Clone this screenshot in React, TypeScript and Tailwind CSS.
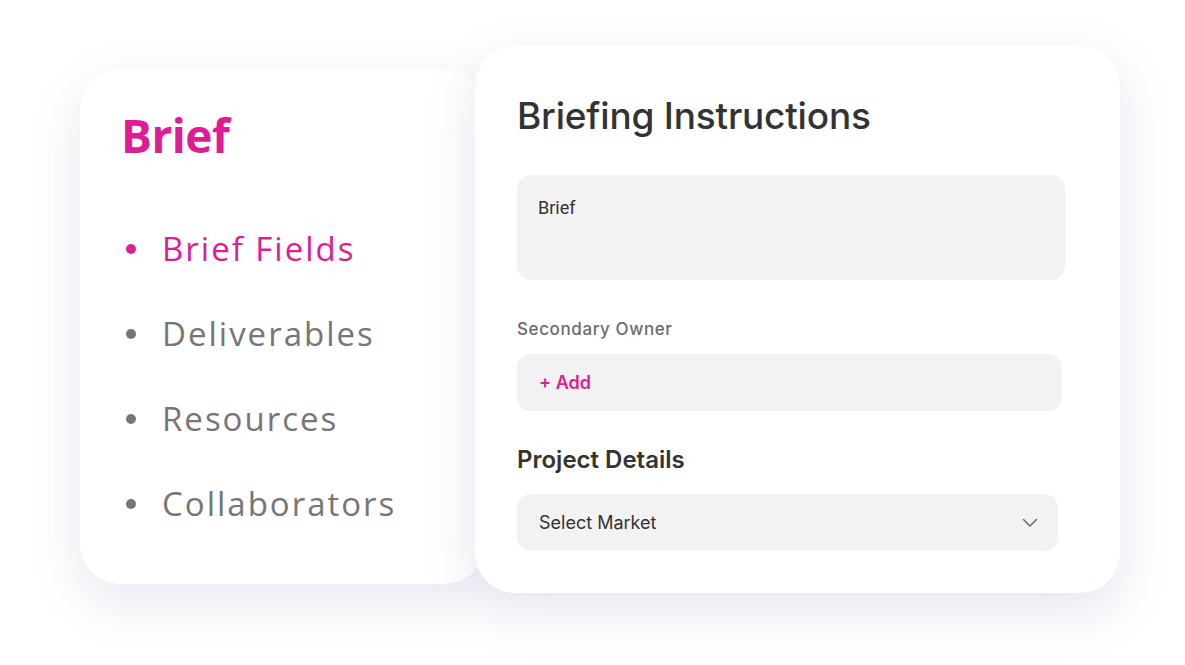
import React from "react";

const navItems = [
  { label: "Brief Fields", active: true },
  { label: "Deliverables", active: false },
  { label: "Resources", active: false },
  { label: "Collaborators", active: false },
];

export default function App() {
  return (
    <div className="w-[1185px] h-[665px] bg-white overflow-hidden">
      <div className="flex items-start pl-[80px] pt-[46px]">
        {/* Carte de gauche : navigation du brief */}
        <div
          className="w-[405px] h-[515px] mt-[23px] bg-white rounded-[40px] shadow-[0_18px_50px_rgba(110,110,170,0.16)] pl-[41px] pt-[38px]"
          style={{ fontFamily: "'Open Sans', 'Noto Sans', sans-serif" }}
        >
          <h1 className="text-[46px] leading-[56px] font-bold text-[#dd1d93] tracking-[-0.5px]">Brief</h1>
          <ul className="mt-[64px] flex flex-col gap-[41px]">
            {navItems.map((item) => (
              <li key={item.label} className="flex items-center h-[44px]">
                <span
                  className={
                    "w-[10px] h-[10px] rounded-full ml-[5px] mr-[26px] " +
                    (item.active ? "bg-[#dd1d93]" : "bg-[#767676]")
                  }
                />
                <span
                  className={
                    "text-[33px] leading-[44px] font-normal tracking-[2px] " +
                    (item.active ? "text-[#dd1d93]" : "text-[#767676]")
                  }
                >
                  {item.label}
                </span>
              </li>
            ))}
          </ul>
        </div>

        {/* Carte de droite : formulaire */}
        <div
          className="relative z-10 ml-[-10px] w-[645px] h-[547px] bg-white rounded-[40px] shadow-[0_18px_50px_rgba(110,110,170,0.18)] pl-[42px] pt-[48px]"
          style={{ fontFamily: "Inter, 'Noto Sans', sans-serif" }}
        >
          <h2 className="text-[37px] leading-[44px] font-medium text-[#333333] tracking-[-0.2px]">
            Briefing Instructions
          </h2>

          <div className="mt-[37px] w-[548px] h-[105px] rounded-[14px] bg-[#f2f2f2] px-[21px] pt-[21px]">
            <span
              className="text-[18px] leading-[24px] text-[#333333]"
              style={{ fontFamily: "Roboto, 'Noto Sans', sans-serif" }}
            >
              Brief
            </span>
          </div>

          <div className="mt-[38px] text-[17px] leading-[22px] font-medium text-[#6b6b6b] tracking-[0.6px]">
            Secondary Owner
          </div>

          <div className="mt-[14px] w-[545px] h-[57px] rounded-[14px] bg-[#f2f2f2] px-[22px] flex items-center">
            <span className="text-[18px] font-semibold text-[#dd1d93]">+ Add</span>
          </div>

          <div className="mt-[34px] text-[24px] leading-[30px] font-semibold text-[#333333]">Project Details</div>

          <div className="mt-[19px] w-[541px] h-[57px] rounded-[14px] bg-[#f2f2f2] pl-[22px] pr-[20px] flex items-center justify-between">
            <span className="text-[18px] text-[#333333]">Select Market</span>
            <svg width="16" height="10" viewBox="0 0 16 10" fill="none">
              <path d="M1.5 1.5L8 8L14.5 1.5" stroke="#6f6f6f" strokeWidth="1.6" strokeLinecap="round" strokeLinejoin="round" />
            </svg>
          </div>
        </div>
      </div>
    </div>
  );
}
